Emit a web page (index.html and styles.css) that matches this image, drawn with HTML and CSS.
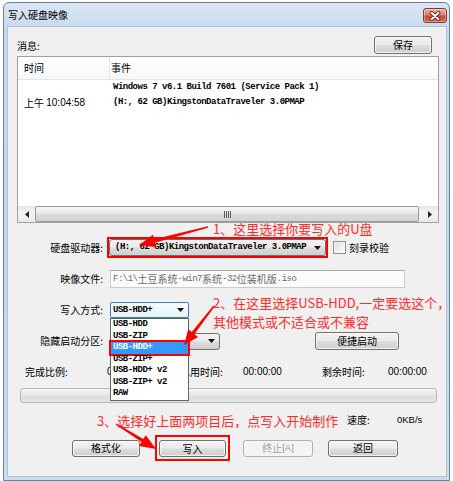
FILE: index.html
```html
<!DOCTYPE html>
<html lang="zh-CN">
<head>
<meta charset="utf-8">
<title>写入硬盘映像</title>
<link rel="stylesheet" href="styles.css">
</head>
<body>
<div class="window">
  <div class="titlebar">
    <span class="title">写入硬盘映像</span>
    <span class="close"><svg width="14" height="10" viewBox="0 0 14 10"><path d="M3.5 1.8L10.5 8.2M10.5 1.8L3.5 8.2" stroke="#5a2318" stroke-width="3.6" stroke-linecap="round"/><path d="M3.5 1.8L10.5 8.2M10.5 1.8L3.5 8.2" stroke="#fff" stroke-width="2" stroke-linecap="round"/></svg></span>
  </div>
  <div class="client">
    <div class="msg-head">
      <span class="lbl">消息:</span>
      <span class="btn save">保存</span>
    </div>
    <div class="listbox">
      <div class="lv-header"><div class="h1">时间</div><div class="h2">事件</div></div>
      <div class="lv-body">
        <div class="c1"></div><div class="c2 m">Windows 7 v6.1 Build 7601 (Service Pack 1)</div>
        <div class="c1">上午 <span class="num">10:04:58</span></div><div class="c2 m">(H:, 62 GB)KingstonDataTraveler 3.0PMAP</div>
      </div>
      <div class="hscroll">
        <span class="sarrow"><svg width="4" height="7" viewBox="0 0 4 7"><path d="M4 0V7L0 3.5Z" fill="#222"/></svg></span>
        <span class="track"><span class="thumb"><span class="grip"></span></span></span>
        <span class="sarrow"><svg width="4" height="7" viewBox="0 0 4 7"><path d="M0 0V7L4 3.5Z" fill="#222"/></svg></span>
      </div>
    </div>

    <div class="row r-drive">
      <span class="lab">硬盘驱动器:</span>
      <span class="redbox rb-drive"><span class="combo drive"><span class="m">(H:, 62 GB)KingstonDataTraveler 3.0PMAP</span><svg class="caret" width="7" height="4" viewBox="0 0 7 4"><path d="M0 0H7L3.5 4Z" fill="#111"/></svg></span></span>
      <span class="check"></span><span class="checklabel">刻录校验</span>
    </div>

    <div class="row r-file">
      <span class="lab">映像文件:</span>
      <span class="input"><span class="m">F:\1\</span>土豆系统<span class="m">-win7</span>系统<span class="m">-32</span>位装机版<span class="m">.iso</span></span>
    </div>

    <div class="row r-mode">
      <span class="lab">写入方式:</span>
      <span class="combo mode"><span class="m">USB-HDD+</span><svg class="caret" width="7" height="4" viewBox="0 0 7 4"><path d="M0 0H7L3.5 4Z" fill="#111"/></svg>
        <span class="dropdown">
          <span class="opt m">USB-HDD</span>
          <span class="opt m">USB-ZIP</span>
          <span class="opt m sel">USB-HDD+</span>
          <span class="opt m">USB-ZIP+</span>
          <span class="opt m">USB-HDD+ v2</span>
          <span class="opt m">USB-ZIP+ v2</span>
          <span class="opt m">RAW</span>
        </span>
      </span>
    </div>

    <div class="row r-hide">
      <span class="lab">隐藏启动分区:</span>
      <span class="combo hide"><svg class="caret" width="7" height="4" viewBox="0 0 7 4"><path d="M0 0H7L3.5 4Z" fill="#111"/></svg></span>
      <span class="btn quick">便捷启动</span>
    </div>

    <div class="stats">
      <span class="s1">完成比例:</span><span class="s2 num">0%</span><span class="s3">已用时间:</span><span class="s4 num">00:00:00</span><span class="s5">剩余时间:</span><span class="num">00:00:00</span>
    </div>

    <div class="progress"></div>

    <div class="speed"><span class="sp-l">速度:</span><span class="num sp-v">0KB/s</span></div>

    <div class="buttons">
      <span class="btn b-format">格式化</span>
      <span class="redbox rb-write"><span class="btn b-write">写入</span></span>
      <span class="btn disabled b-stop">终止<span class="num">[A]</span></span>
      <span class="btn b-back">返回</span>
    </div>
  </div>
</div>

<div class="note n1">1、这里选择你要写入的U盘</div>
<div class="note n2">2、在这里选择USB-HDD,一定要选这个，<br>其他模式或不适合或不兼容</div>
<div class="note n3">3、选择好上面两项目后，点写入开始制作</div>

<svg class="arrows" width="453" height="481" viewBox="0 0 453 481">
  <polygon points="207.9,226.3 154.1,239.3 153.0,234.8 139,245 156.0,247.2 154.9,242.7 208.1,227.7" fill="#f00"/>
  <polygon points="213.4,305.5 191.8,332.1 188.2,329.2 184,345 198.1,337.0 194.4,334.2 214.6,306.5" fill="#f00"/>
  <polygon points="115.6,424.6 141.6,442.0 139.0,445.9 156,449 145.8,435.2 143.3,439.1 116.4,423.4" fill="#f00"/>
</svg>
</body>
</html>
```

FILE: styles.css
```css
* { box-sizing: border-box; margin: 0; padding: 0; }
html, body { width: 453px; height: 481px; overflow: hidden; }
body {
  background: #fff;
  font-family: "Noto Sans CJK SC", "Noto Sans", sans-serif;
  font-size: 10px;
  line-height: 1;
  color: #000;
  position: relative;
}
.m {
  font-family: "Liberation Mono", monospace;
  font-size: 9px;
  letter-spacing: -0.5px;
  font-weight: bold;
  white-space: pre;
}
.num { font-family: "Liberation Sans", Arial, sans-serif; font-size: 10px; }

.window {
  margin: 2px 0 0 3px;
  width: 447px;
  border: 1px solid #6e8399;
  border-radius: 6px 6px 0 0;
  padding: 0 2px 3px 3px;
  background: linear-gradient(#dae6f4, #c6d8ee 30px, #c4d7ed 60%, #cadcf0);
}
.titlebar {
  height: 23px;
  display: flex;
  justify-content: space-between;
  align-items: flex-start;
  padding-left: 1px;
}
.title { margin-top: 6px; font-size: 10px; line-height: 12px; }
.close {
  width: 24px;
  height: 15px;
  margin-top: 5px;
  border: 1px solid #893a2d;
  border-radius: 3px;
  background: linear-gradient(#eeb2a4, #d9806d 45%, #c54a34 55%, #d36d55);
  box-shadow: inset 0 0 0 1px rgba(255,255,255,.35);
  display: flex;
  align-items: center;
  justify-content: center;
}
.client {
  height: 451px;
  background: #f0f0f0;
  border: 1px solid #b1c3d8;
  padding: 9px 7px 0 9px;
}
.msg-head { height: 18px; display: flex; justify-content: space-between; align-items: center; }
.msg-head .lbl { margin-top: 2px; }

.btn {
  display: inline-flex;
  align-items: center;
  justify-content: center;
  height: 17px;
  border: 1px solid #707070;
  border-radius: 3px;
  background: linear-gradient(#f2f2f2, #ebebeb 48%, #dddddd 52%, #cfcfcf);
  box-shadow: inset 0 0 0 1px rgba(255,255,255,.7);
  font-size: 10px;
  flex: none;
}
.save { width: 58px; height: 18px; margin-right: 7px; }

.listbox {
  margin-top: 2px;
  height: 167px;
  border: 1px solid #a0a0a0;
  background: #fff;
  display: flex;
  flex-direction: column;
}
.lv-header {
  height: 23px;
  flex: none;
  display: flex;
  border-bottom: 1px solid #e5e5e5;
  background: linear-gradient(#fff, #f7f8fa);
}
.h1 { width: 92px; padding-left: 6px; border-right: 1px solid #e3e5e8; display: flex; align-items: center; }
.h2 { padding-left: 1px; display: flex; align-items: center; }
.lv-body {
  flex: 1;
  display: grid;
  grid-template-columns: 92px 1fr;
  grid-auto-rows: 15px;
  align-content: start;
}
.c1 { padding-left: 6px; display: flex; align-items: center; white-space: pre; }
.c2 { padding-left: 3px; display: flex; align-items: center; }

.hscroll {
  height: 16px;
  flex: none;
  display: flex;
  background: linear-gradient(#e6e6e6, #f2f2f2 35%, #f2f2f2 65%, #e8e8e8);
}
.sarrow { width: 17px; flex: none; display: flex; align-items: center; justify-content: center; }
.track { flex: 1; display: flex; padding-right: 2px; }
.thumb {
  flex: 1;
  border: 1px solid #9a9a9a;
  border-radius: 2px;
  background: linear-gradient(#f6f6f6, #e9e9e9 45%, #dadada 55%, #d3d3d3);
  display: flex;
  align-items: center;
  justify-content: center;
}
.grip { width: 7px; height: 7px; background: repeating-linear-gradient(90deg, #5d5d5d 0 1px, transparent 1px 2px); }

.row { display: flex; align-items: center; }
.lab { width: 86px; margin-right: 7px; text-align: right; flex: none; }
.r-drive { margin-top: 14px; height: 21px; }
.redbox { border: 2px solid #f00; display: inline-flex; flex: none; }
.rb-drive { margin-left: -3px; }
.combo {
  position: relative;
  display: flex;
  align-items: center;
  height: 17px;
  border: 1px solid #707070;
  border-radius: 3px;
  background: linear-gradient(#f2f2f2, #ebebeb 48%, #dddddd 52%, #cfcfcf);
  padding-left: 5px;
  flex: none;
}
.caret { margin-left: auto; margin-right: 4px; flex: none; }
.drive { width: 217px; }
.check {
  width: 13px;
  height: 13px;
  margin-left: 5px;
  border: 1px solid #8e8f8f;
  background: linear-gradient(135deg, #dcdcdc, #fff);
  box-shadow: inset 0 0 0 1px #f4f4f4;
  flex: none;
}
.checklabel { margin-left: 3px; }

.r-file { margin-top: 12px; height: 18px; }
.input {
  width: 295px;
  height: 18px;
  display: flex;
  align-items: center;
  padding-left: 2px;
  border: 1px solid #c8ccd2;
  border-top-color: #abadb3;
  background: #fbfbfb;
  color: #6d6d6d;
}
.input .m { font-weight: normal; }

.r-mode { margin-top: 14px; height: 16px; }
.mode {
  width: 79px;
  height: 16px;
  padding-left: 2px;
  border-color: #3c7fb1;
  border-radius: 2px;
  background: linear-gradient(#f6fbfe, #e8f3fb);
}
.dropdown {
  position: absolute;
  left: -1px;
  top: calc(100% + 1px);
  width: 79px;
  border: 1px solid #646464;
  background: #fff;
  z-index: 5;
  display: flex;
  flex-direction: column;
}
.opt { height: 11.5px; line-height: 11.5px; padding-left: 2px; display: block; }
.opt.sel { background: #3399ff; color: #fff; outline: 2px solid #f00; }

.r-hide { margin-top: 14px; height: 18px; }
.hide { width: 110px; height: 17px; }
.quick { width: 84px; height: 18px; margin-left: 95px; }

.stats { margin-top: 15px; height: 14px; padding-left: 8px; display: flex; align-items: center; }
.s1 { width: 82px; }
.s2 { width: 73px; }
.s3 { width: 63px; }
.s4 { width: 79px; }
.s5 { width: 66px; }

.progress {
  margin: 9px 2px 0 3px;
  height: 15px;
  border: 1px solid #b6b6b6;
  border-radius: 3px;
  background: linear-gradient(#f4f4f4, #e7e7e7 50%, #dcdcdc 51%, #e6e6e6);
}

.speed { margin-top: 10px; height: 14px; padding-left: 330px; display: flex; align-items: center; }
.sp-l { width: 50px; }
.sp-v { font-size: 9.5px; }

.buttons { margin-top: 8px; height: 26px; padding-left: 55px; display: flex; align-items: center; }
.b-format { width: 68px; }
.rb-write { margin-left: 15px; padding: 3px 2px 2px; }
.b-write { width: 67px; }
.b-stop { width: 70px; margin-left: 13px; }
.b-back { width: 70px; margin-left: 15px; }
.btn.disabled {
  color: #a0a0a0;
  border-color: #adb2b5;
  background: #f4f4f4;
  box-shadow: none;
}
.btn.disabled .num { font-size: 9.5px; }

.note {
  position: absolute;
  color: #ff2c2c;
  font-size: 13px;
  line-height: 19px;
  white-space: nowrap;
  z-index: 10;
}
.n1 { left: 213px; top: 219px; }
.n2 { left: 213px; top: 293px; }
.n3 { left: 97px; top: 411px; }
.arrows { position: absolute; left: 0; top: 0; z-index: 11; pointer-events: none; }
```
